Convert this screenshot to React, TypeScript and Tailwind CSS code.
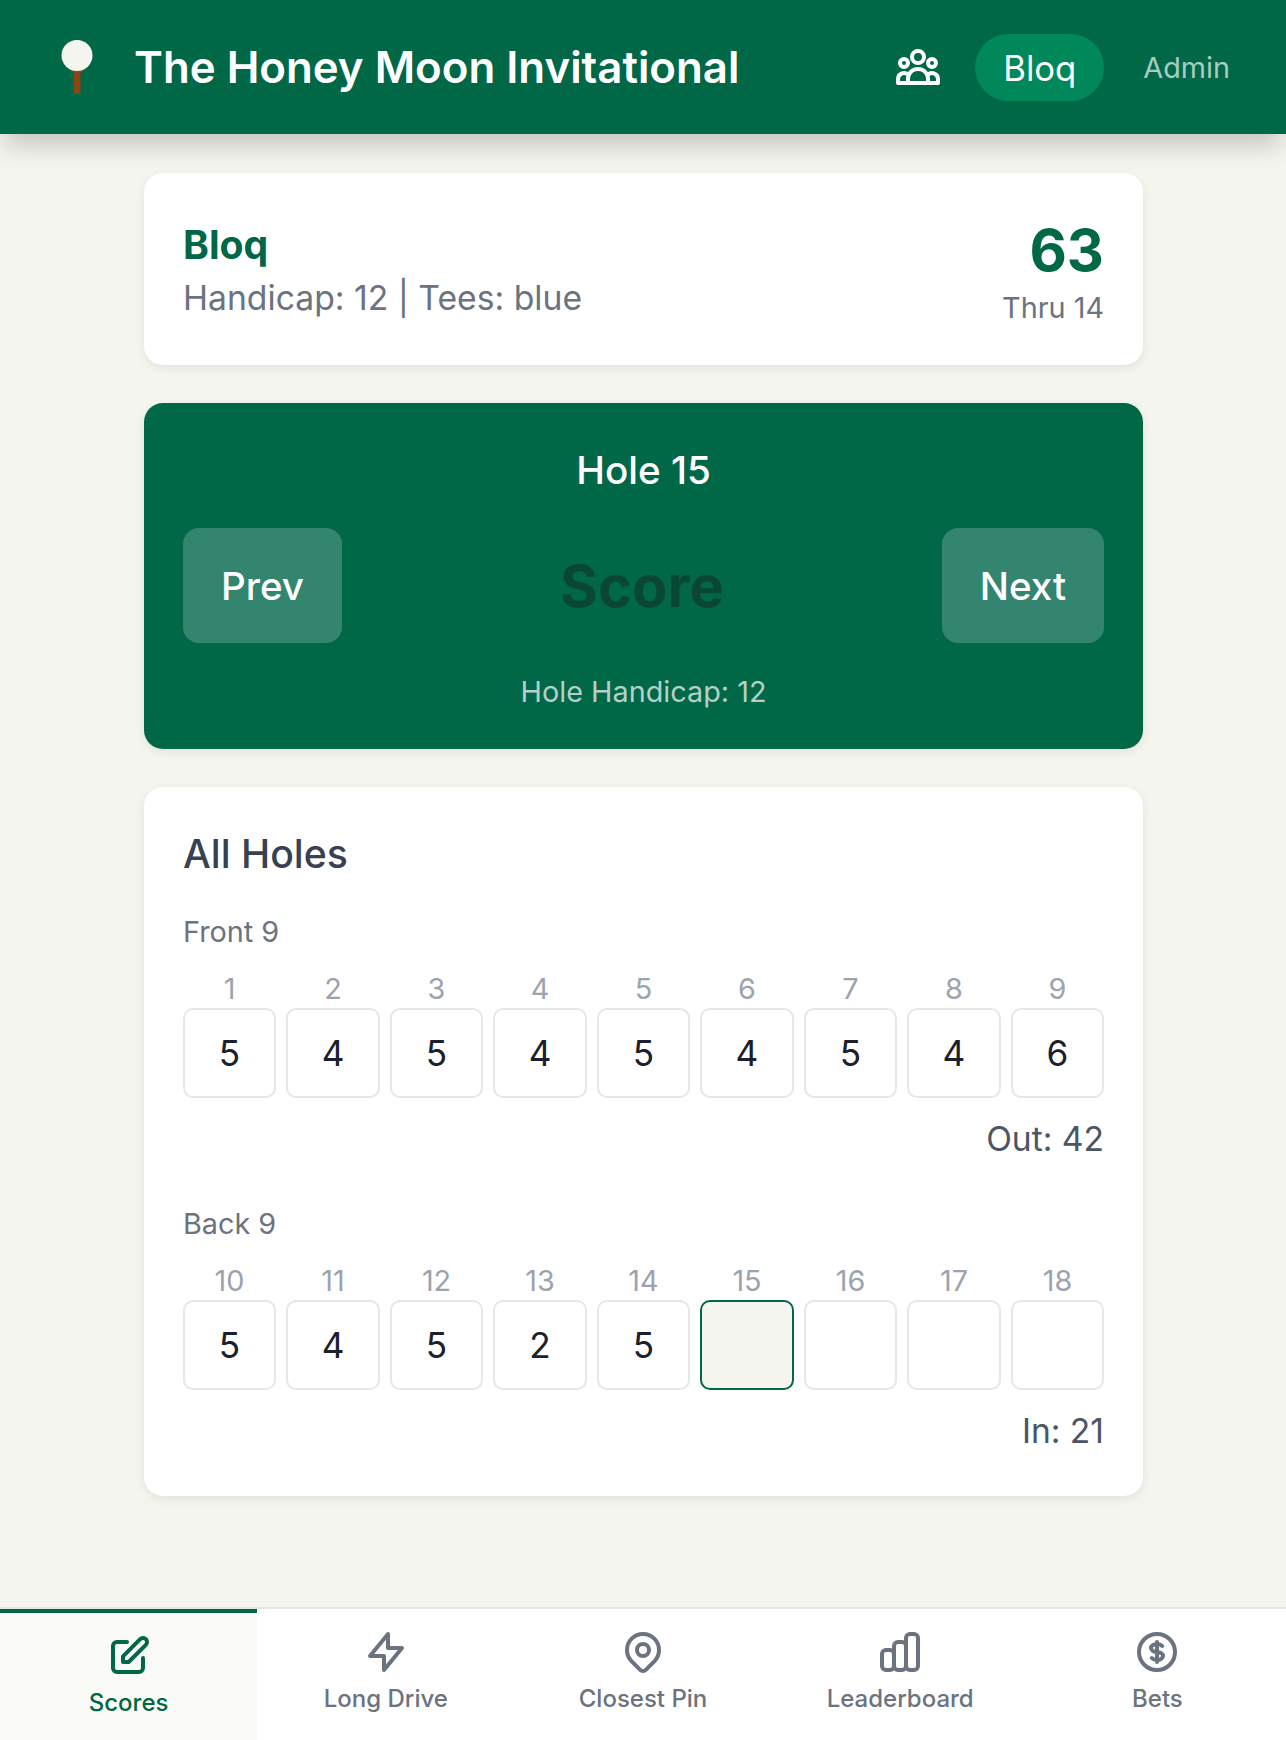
import React from "react";
import {
  HiOutlineUserGroup,
  HiOutlinePencilAlt,
  HiOutlineLightningBolt,
  HiOutlineLocationMarker,
  HiOutlineChartBar,
  HiOutlineCurrencyDollar,
} from "react-icons/hi";

const frontNine = ["5", "4", "5", "4", "5", "4", "5", "4", "6"];
const backNine = ["5", "4", "5", "2", "5", "", "", "", ""];

const TeeLogo = () => (
  <svg width="32" height="54" viewBox="0 0 32 54">
    <rect x="12.5" y="28" width="7" height="26" fill="#8b4513" />
    <rect x="10" y="29" width="12" height="3" fill="#8b4513" />
    <circle cx="16" cy="15.5" r="15.5" fill="#f5f5f0" />
  </svg>
);

const HoleRow = ({
  start,
  scores,
  current,
}: {
  start: number;
  scores: string[];
  current?: number;
}) => (
  <div className="grid grid-cols-9 gap-[10.4px]">
    {scores.map((score, i) => {
      const hole = start + i;
      return (
        <div key={hole} className="flex flex-col items-center">
          <div className="text-[28.8px] leading-[38px] text-[#9ca3af]">{hole}</div>
          <div
            className={
              hole === current
                ? "flex h-[90px] w-full items-center justify-center rounded-[10px] border-2 border-[#006747] bg-[#f5f5f0] text-[35.2px] text-[#1a202c]"
                : "flex h-[90px] w-full items-center justify-center rounded-[10px] border-2 border-[#e5e7eb] bg-white text-[35.2px] text-[#1a202c]"
            }
          >
            {score}
          </div>
        </div>
      );
    })}
  </div>
);

const NavItem = ({
  label,
  Icon,
  active,
}: {
  label: string;
  Icon: React.ComponentType<{ className?: string }>;
  active?: boolean;
}) => (
  <div
    className={
      active
        ? "flex flex-1 flex-col items-center border-t-4 border-[#006747] bg-[#fafbf7] pt-[19px] text-[#006747]"
        : "flex flex-1 flex-col items-center pt-[19px] text-[#6b7280]"
    }
  >
    <Icon className="h-[48px] w-[48px]" />
    <div className="mt-[7px] text-[24px] font-medium leading-[32px]">{label}</div>
  </div>
);

export default function App() {
  return (
    <div className="flex min-h-[1740px] flex-col bg-[#f5f5f0] font-['Inter',sans-serif]">
      <header className="flex h-[134px] items-center bg-[#006747] pl-[61px] pr-[56px] shadow-[0_16px_24px_-5px_rgba(0,0,0,0.2)]">
        <TeeLogo />
        <h1 className="ml-[41px] pt-[2px] text-[43.8px] font-semibold text-white">
          The Honey Moon Invitational
        </h1>
        <HiOutlineUserGroup className="ml-auto h-[48px] w-[48px] text-white" />
        <div className="ml-[33px] flex h-[67px] w-[129px] items-center justify-center rounded-full bg-[#00875a] pt-[2px] text-[34.7px] text-white">
          Bloq
        </div>
        <div className="ml-[39px] pt-[2px] text-[28.8px] text-[#a6cdbf]">Admin</div>
      </header>

      <main className="flex w-full flex-col gap-[38px] pl-[144px] pr-[143px] pt-[39px]">
        <section className="flex items-start justify-between rounded-[19px] bg-white p-[39px] shadow-[0_3px_10px_rgba(0,0,0,0.08)]">
          <div className="pt-[8px]">
            <div className="text-[39.2px] font-bold leading-[50px] text-[#006747]">Bloq</div>
            <div className="pt-[2px] text-[33.7px] leading-[52px] text-[#6b7280]">
              Handicap: 12 | Tees: blue
            </div>
          </div>
          <div className="text-right">
            <div className="text-[57.6px] font-bold leading-[76px] text-[#006747]">63</div>
            <div className="pt-[2px] text-[28.8px] leading-[36px] text-[#6b7280]">Thru 14</div>
          </div>
        </section>

        <section className="rounded-[19px] bg-[#006747] p-[39px] shadow-[0_3px_10px_rgba(0,0,0,0.08)]">
          <div className="text-center text-[38.6px] font-medium leading-[56px] text-white">
            Hole 15
          </div>
          <div className="mt-[30px] flex items-center justify-between">
            <div className="flex h-[115px] w-[159px] items-center justify-center rounded-[16px] bg-[#338570] pt-[2px] text-[38.6px] font-medium text-white">
              Prev
            </div>
            <div className="pt-[2px] text-[57.8px] font-bold text-[#0a4636]">Score</div>
            <div className="flex h-[115px] w-[162px] items-center justify-center rounded-[16px] bg-[#338570] pt-[2px] text-[38.6px] font-medium text-white">
              Next
            </div>
          </div>
          <div className="mt-[30px] text-center text-[28.8px] leading-[37px] text-[#b3d1c8]">
            Hole Handicap: 12
          </div>
        </section>

        <section className="rounded-[19px] bg-white px-[39px] pb-[43px] pt-[39px] shadow-[0_3px_10px_rgba(0,0,0,0.08)]">
          <h2 className="text-[39.2px] font-medium leading-[56px] text-[#374151]">All Holes</h2>
          <div className="mt-[30px] text-[28.8px] leading-[40px] text-[#6b7280]">Front 9</div>
          <div className="mt-[18px]">
            <HoleRow start={1} scores={frontNine} />
          </div>
          <div className="mt-[19px] text-right text-[33.6px] leading-[44px] text-[#4b5563]">
            Out: 42
          </div>
          <div className="mt-[43px] text-[28.8px] leading-[40px] text-[#6b7280]">Back 9</div>
          <div className="mt-[18px]">
            <HoleRow start={10} scores={backNine} current={15} />
          </div>
          <div className="mt-[19px] text-right text-[33.6px] leading-[44px] text-[#4b5563]">
            In: 21
          </div>
        </section>
      </main>

      <nav className="mt-auto flex h-[133px] border-t-2 border-[#e5e7eb] bg-white">
        <NavItem label="Scores" Icon={HiOutlinePencilAlt} active />
        <NavItem label="Long Drive" Icon={HiOutlineLightningBolt} />
        <NavItem label="Closest Pin" Icon={HiOutlineLocationMarker} />
        <NavItem label="Leaderboard" Icon={HiOutlineChartBar} />
        <NavItem label="Bets" Icon={HiOutlineCurrencyDollar} />
      </nav>
    </div>
  );
}
